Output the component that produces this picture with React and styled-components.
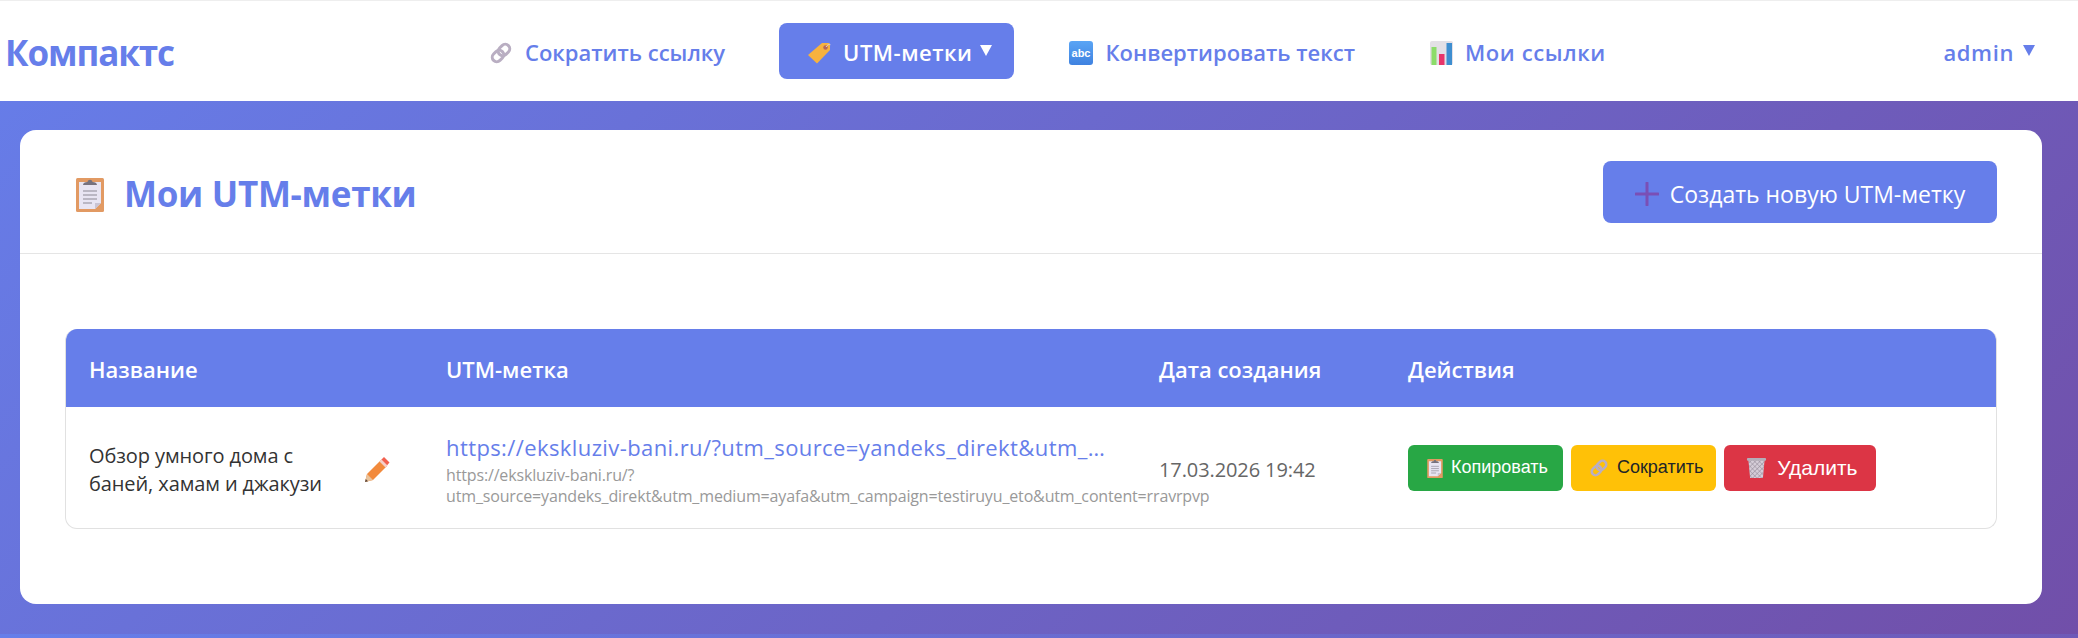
import React from "react";
import styled, { createGlobalStyle } from "styled-components";

const GlobalStyle = createGlobalStyle`
  * {
    box-sizing: border-box;
  }
  body {
    margin: 0;
    font-family: "Open Sans", "Noto Sans", sans-serif;
    line-height: 1.6;
    color: #333;
    background: linear-gradient(135deg, #667eea 0%, #714fa9 100%);
  }
`;

//icons
const LinkIcon = ({ size = 24 }) => (
  <svg width={size} height={size} viewBox="0 0 24 24" fill="none">
    <g transform="rotate(-45 12 12)" stroke="#b9aec2" strokeWidth="3">
      <rect x="1.5" y="7.5" width="12.5" height="9" rx="4.5" />
      <rect x="10" y="7.5" width="12.5" height="9" rx="4.5" />
    </g>
  </svg>
);

const TagIcon = () => (
  <svg width="24" height="22" viewBox="0 0 24 22">
    <path d="M15 1h6.500A1.500 1.500 0 0 1 23 2.500V8L10 21.500 1 13z" fill="#f7b23e" />
    <circle cx="18.500" cy="5.500" r="2.200" fill="#b5655a" />
    <path d="M19 5c2-3 4-3 4.500-2" fill="none" stroke="#d9d0dd" strokeWidth="1" />
  </svg>
);

const AbcIcon = () => (
  <svg width="27" height="24" viewBox="-3 0 27 24">
    <defs>
      <linearGradient id="abc" x1="0" y1="0" x2="0" y2="1">
        <stop offset="0" stopColor="#5aa5f5" />
        <stop offset="1" stopColor="#3f82e0" />
      </linearGradient>
    </defs>
    <rect width="24" height="24" rx="3" fill="url(#abc)" />
    <text x="12" y="16" fontSize="11" textAnchor="middle" fill="#fff" fontFamily="Liberation Sans, sans-serif">abc</text>
  </svg>
);

const ChartIcon = () => (
  <svg width="23" height="24" viewBox="0 0 23 24">
    <rect width="23" height="24" rx="2" fill="#e3e0e6" />
    <rect x="1.500" y="6" width="5" height="18" fill="#8cdc6a" />
    <rect x="9" y="13" width="5.500" height="11" fill="#e8356a" />
    <rect x="16.500" y="2" width="5.500" height="22" fill="#3e8ed0" />
  </svg>
);

const ClipboardIcon = ({ width = 28, height = 36 }) => (
  <svg width={width} height={height} viewBox="0 0 28 36">
    <rect y="2" width="28" height="34" rx="1.5" fill="#e29a63" />
    <path d="M3 6h22v21l-6 6H3z" fill="#e8e5f3" />
    <path d="M25 27h-6v6z" fill="#c9c4d4" />
    <path d="M7 15h14M7 19h14M7 23h14M7 27h9" stroke="#8c8a96" strokeWidth="1.2" />
    <path d="M7 9c0-2 2-3 4.500-3 .5-3 4.500-3 5 0 2.500 0 4.500 1 4.500 3z" fill="#77727e" />
  </svg>
);

const TrashIcon = ({ size = 21 }) => (
  <svg width={size} height={size} viewBox="0 0 22 22">
    <defs>
      <pattern id="mesh" width="3.500" height="3.500" patternUnits="userSpaceOnUse" patternTransform="rotate(45)">
        <path d="M0 0h3.500v3.500" fill="none" stroke="#8f8594" strokeWidth="1" />
      </pattern>
    </defs>
    <path d="M2.500 3h17l-1.800 19H4.300z" fill="#d5cdd8" />
    <path d="M2.500 3h17l-1.800 19H4.300z" fill="url(#mesh)" />
    <rect x="1" y="1" width="20" height="3" rx="1" fill="#b4adb8" />
  </svg>
);

const PencilIcon = () => (
  <svg width="26" height="26" viewBox="0 0 26 26">
    <path d="M1 25l2-8L17 3l6 6L9 23z" fill="#f28a3c" />
    <path d="M1 25l2-8 6 6z" fill="#e9c39c" />
    <path d="M1 25l.8-3 2.200 2.200z" fill="#57453b" />
    <path d="M17 3l3-3 5.500 5.500-3 3.500z" fill="#f2604f" />
    <path d="M15.500 4.500l2-2 6 6-2 2z" fill="#f5cfc9" />
  </svg>
);

const PlusIcon = () => (
  <svg width="24" height="24" viewBox="0 0 24 24">
    <path d="M12 1v22M1 12h22" stroke="#7a4fb5" strokeWidth="3" strokeLinecap="round" />
  </svg>
);

const App = () => {
  return (
    <>
      <GlobalStyle />
      <Nav>
        <Logo>Компактс</Logo>
        <Menu>
          <MenuLink>
            <LinkIcon />
            Сократить ссылку
          </MenuLink>
          <MenuLink $active $left={26} $spacing={0.5}>
            <TagIcon />
            UTM-метки
            <Caret $tight />
          </MenuLink>
          <MenuLink $left={24}>
            <AbcIcon />
            Конвертировать текст
          </MenuLink>
          <MenuLink $left={19} $spacing={0.6}>
            <ChartIcon />
            Мои ссылки
          </MenuLink>
        </Menu>
        <UserMenu>
          admin
          <Caret />
        </UserMenu>
      </Nav>
      <Card>
        <CardHeader>
          <Title>
            <ClipboardIcon />
            Мои UTM-метки
          </Title>
          <CreateButton>
            <PlusIcon />
            Создать новую UTM-метку
          </CreateButton>
        </CardHeader>
        <CardBody>
          <TableWrap>
            <Table>
              <thead>
                <tr>
                  <Th $width={357}>Название</Th>
                  <Th $width={713}>UTM-метка</Th>
                  <Th $width={249}>Дата создания</Th>
                  <Th>Действия</Th>
                </tr>
              </thead>
              <tbody>
                <tr>
                  <TextCell>
                    <NameCell>
                      <span>Обзор умного дома с баней, хамам и джакузи</span>
                      <PencilIcon />
                    </NameCell>
                  </TextCell>
                  <UtmCell>
                    <UtmLink>https://ekskluziv-bani.ru/?utm_source=yandeks_direkt&utm_medium=ayafa</UtmLink>
                    <UtmFull>
                      https://ekskluziv-bani.ru/?
                      utm_source=yandeks_direkt&utm_medium=ayafa&utm_campaign=testiruyu_eto&utm_content=rravrpvp
                    </UtmFull>
                  </UtmCell>
                  <DateCell>17.03.2026 19:42</DateCell>
                  <Td>
                    <Actions>
                      <ActionButton $bg="#28a745" $color="#fff" $padding="0 15px 0 19px">
                        <ClipboardIcon width={16} height={20} />
                        Копировать
                      </ActionButton>
                      <ActionButton $bg="#ffc107" $color="#212529" $padding="0 13px 0 18px">
                        <LinkIcon size={20} />
                        Сократить
                      </ActionButton>
                      <ActionButton $bg="#dc3545" $color="#fff" $padding="0 18px 0 22px" $large>
                        <TrashIcon />
                        Удалить
                      </ActionButton>
                    </Actions>
                  </Td>
                </tr>
              </tbody>
            </Table>
          </TableWrap>
        </CardBody>
      </Card>
    </>
  );
};

const Nav = styled.nav`
  height: 101px;
  padding: 0 43px 0 5px;
  display: flex;
  align-items: center;
  background: #fff;
  border-top: 1px solid #eee;
`;

const Logo = styled.div`
  width: 166px;
  padding-top: 4px;
  font-size: 35px;
  font-weight: 700;
  letter-spacing: -1.1px;
  color: #667eea;
`;

const Menu = styled.div`
  margin-left: 290px;
  display: flex;
  align-items: center;
`;

const MenuLink = styled.a`
  height: 56px;
  margin-left: ${(props) => props.$left || 0}px;
  padding: 4px 28px 0;
  display: flex;
  align-items: center;
  gap: 12px;
  border-radius: 8px;
  font-size: 22px;
  font-weight: 600;
  letter-spacing: ${(props) => props.$spacing || 0}px;
  color: ${(props) => (props.$active ? "#fff" : "#667eea")};
  background: ${(props) => (props.$active ? "#667eea" : "transparent")};
`;

const Caret = styled.span`
  width: 0;
  height: 0;
  margin: 0 ${(props) => (props.$tight ? "-6px" : "0")} 6px ${(props) => (props.$tight ? "-4px" : "0")};
  border-left: 6px solid transparent;
  border-right: 6px solid transparent;
  border-top: 11px solid currentColor;
`;

const UserMenu = styled.div`
  margin-left: auto;
  padding-top: 4px;
  display: flex;
  align-items: center;
  gap: 9px;
  font-size: 22px;
  font-weight: 600;
  letter-spacing: 0.6px;
  color: #667eea;
`;

const Card = styled.main`
  margin: 29px 36px 30px 20px;
  height: 474px;
  background: #fff;
  border-radius: 16px;
`;

const CardHeader = styled.header`
  height: 124px;
  padding: 0 45px 0 46px;
  display: flex;
  align-items: center;
  justify-content: space-between;
  border-bottom: 1px solid #e5e5e5;
`;

const Title = styled.h1`
  margin: 0;
  padding: 4px 0 0 10px;
  display: flex;
  align-items: center;
  gap: 20px;
  font-size: 35px;
  font-weight: 700;
  letter-spacing: -0.3px;
  color: #667eea;
`;

const CreateButton = styled.button`
  width: 394px;
  height: 62px;
  padding: 4px 0 0;
  display: flex;
  align-items: center;
  justify-content: center;
  gap: 11px;
  border: 0;
  border-radius: 8px;
  font-family: inherit;
  font-size: 23px;
  color: #fff;
  background: #667eea;
`;

const CardBody = styled.div`
  padding: 75px 45px;
`;

const TableWrap = styled.div`
  border-radius: 12px;
  overflow: hidden;
  border: 1px solid #e1e1e1;
  border-top: 0;
`;

const Table = styled.table`
  width: 100%;
  table-layout: fixed;
  border-collapse: collapse;
`;

const Th = styled.th`
  width: ${(props) => (props.$width ? `${props.$width}px` : "auto")};
  height: 78px;
  padding: 4px 23px 0;
  text-align: left;
  font-size: 22px;
  font-weight: 600;
  color: #fff;
  background: #667eea;
`;

const Td = styled.td`
  height: 121px;
  padding: 0 23px;
  vertical-align: middle;
  font-size: 20px;
  line-height: 1.4;
`;

const TextCell = styled(Td)`
  padding-top: 5px;
`;

const UtmCell = styled(Td)`
  padding-top: 2px;
`;

const DateCell = styled(TextCell)`
  letter-spacing: -0.1px;
  color: #666;
`;

const NameCell = styled.div`
  padding-right: 10px;
  display: flex;
  align-items: center;
  gap: 20px;
  letter-spacing: -0.1px;
  span {
    flex: 1;
  }
`;

const UtmLink = styled.a`
  display: block;
  font-size: 22px;
  line-height: 1.5;
  letter-spacing: 0.4px;
  color: #667eea;
  white-space: nowrap;
  overflow: hidden;
  text-overflow: ellipsis;
`;

const UtmFull = styled.div`
  margin-top: 1px;
  font-size: 16px;
  line-height: 21px;
  letter-spacing: -0.15px;
  color: #999;
`;

const Actions = styled.div`
  display: flex;
  gap: 8px;
`;

const ActionButton = styled.button`
  height: 46px;
  padding: ${(props) => props.$padding};
  display: flex;
  align-items: center;
  gap: ${(props) => (props.$large ? "10px" : "8px")};
  border: 0;
  border-radius: 6px;
  font-family: "Liberation Sans", sans-serif;
  font-size: ${(props) => (props.$large ? "21px" : "18px")};
  color: ${(props) => props.$color};
  background: ${(props) => props.$bg};
`;

export default App;
